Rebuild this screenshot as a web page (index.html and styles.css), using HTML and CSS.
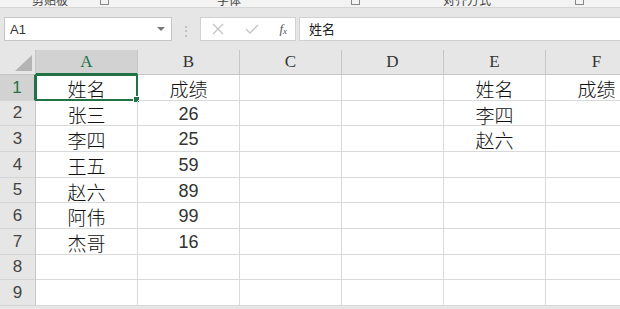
FILE: index.html
```html
<!DOCTYPE html>
<html>
<head>
	<title>成绩表</title>
	<link rel="stylesheet" href="styles.css">
</head>
<body>
	<div class="ribbon-edge">
		<span class="group-label label-clip">剪贴板</span>
		<span class="launcher launch-clip"></span>
		<span class="group-label label-font">字体</span>
		<span class="launcher launch-font"></span>
		<span class="group-label label-align">对齐方式</span>
		<span class="launcher launch-align"></span>
	</div>

	<div class="formula-bar">
		<div class="name-box">
			<span>A1</span>
			<span class="drop"></span>
		</div>
		<div class="grip">⋮</div>
		<div class="fx-buttons">
			<svg width="12" height="12" viewBox="0 0 12 12"><path d="M1 1 L11 11 M11 1 L1 11" stroke="#c4c4c4" stroke-width="1.3" fill="none"/></svg>
			<svg width="14" height="12" viewBox="0 0 14 12"><path d="M1 6 L5 10 L13 2" stroke="#c4c4c4" stroke-width="1.3" fill="none"/></svg>
			<span class="fx">f<sub>x</sub></span>
		</div>
		<div class="formula-input">姓名</div>
	</div>

	<div class="sheet">
		<div class="corner"><span class="tri"></span></div>
		<div class="col-head selected">A</div>
		<div class="col-head">B</div>
		<div class="col-head">C</div>
		<div class="col-head">D</div>
		<div class="col-head">E</div>
		<div class="col-head">F</div>

		<div class="row-head selected">1</div>
		<div class="cell active">姓名<span class="handle"></span></div>
		<div class="cell">成绩</div>
		<div class="cell"></div>
		<div class="cell"></div>
		<div class="cell">姓名</div>
		<div class="cell">成绩</div>

		<div class="row-head">2</div>
		<div class="cell">张三</div>
		<div class="cell num">26</div>
		<div class="cell"></div>
		<div class="cell"></div>
		<div class="cell">李四</div>
		<div class="cell"></div>

		<div class="row-head">3</div>
		<div class="cell">李四</div>
		<div class="cell num">25</div>
		<div class="cell"></div>
		<div class="cell"></div>
		<div class="cell">赵六</div>
		<div class="cell"></div>

		<div class="row-head">4</div>
		<div class="cell">王五</div>
		<div class="cell num">59</div>
		<div class="cell"></div>
		<div class="cell"></div>
		<div class="cell"></div>
		<div class="cell"></div>

		<div class="row-head">5</div>
		<div class="cell">赵六</div>
		<div class="cell num">89</div>
		<div class="cell"></div>
		<div class="cell"></div>
		<div class="cell"></div>
		<div class="cell"></div>

		<div class="row-head">6</div>
		<div class="cell">阿伟</div>
		<div class="cell num">99</div>
		<div class="cell"></div>
		<div class="cell"></div>
		<div class="cell"></div>
		<div class="cell"></div>

		<div class="row-head">7</div>
		<div class="cell">杰哥</div>
		<div class="cell num">16</div>
		<div class="cell"></div>
		<div class="cell"></div>
		<div class="cell"></div>
		<div class="cell"></div>

		<div class="row-head">8</div>
		<div class="cell"></div>
		<div class="cell"></div>
		<div class="cell"></div>
		<div class="cell"></div>
		<div class="cell"></div>
		<div class="cell"></div>

		<div class="row-head">9</div>
		<div class="cell"></div>
		<div class="cell"></div>
		<div class="cell"></div>
		<div class="cell"></div>
		<div class="cell"></div>
		<div class="cell"></div>
	</div>
</body>
</html>
```

FILE: styles.css
```css
body {
	margin: 0;
	width: 620px;
	height: 309px;
	overflow: hidden;
	background-color: #e6e6e6;
	font-family: "Noto Sans CJK SC", "Liberation Sans", sans-serif;
}

/* bottom edge of the ribbon, labels cut off */
.ribbon-edge {
	position: relative;
	height: 7px;
	overflow: hidden;
	background-color: #f3f3f3;
	border-bottom: 1px solid #d6d6d6;
}

.group-label {
	position: absolute;
	top: -9px;
	font-size: 12px;
	color: #444;
}

.label-clip { left: 32px; }
.label-font { left: 217px; }
.label-align { left: 443px; }

.launcher {
	position: absolute;
	top: -4px;
	width: 7px;
	height: 7px;
	border: 1px solid #888;
}

.launch-clip { left: 100px; }
.launch-font { left: 351px; }
.launch-align { left: 575px; }

.formula-bar {
	display: flex;
	align-items: center;
	height: 24px;
	padding: 9px 0 9px 4px;
}

.name-box {
	display: flex;
	align-items: center;
	justify-content: space-between;
	box-sizing: border-box;
	width: 168px;
	height: 24px;
	padding: 0 6px 0 5px;
	background-color: #fff;
	border: 1px solid #c6c6c6;
	font-family: "Liberation Sans", sans-serif;
	font-size: 13px;
	color: #333;
}

.drop {
	width: 0;
	height: 0;
	border-left: 4px solid transparent;
	border-right: 4px solid transparent;
	border-top: 4px solid #777;
}

.grip {
	width: 28px;
	text-align: center;
	color: #b0b0b0;
	font-size: 12px;
}

.fx-buttons {
	display: flex;
	align-items: center;
	justify-content: space-between;
	box-sizing: border-box;
	width: 96px;
	height: 24px;
	padding: 0 8px 0 11px;
	background-color: #fff;
	border: 1px solid #d0d0d0;
}

.fx {
	font-family: "Liberation Serif", serif;
	font-style: italic;
	font-size: 13px;
	color: #555;
}

.fx sub {
	font-size: 9px;
	vertical-align: -1px;
}

.formula-input {
	flex: 1;
	box-sizing: border-box;
	height: 24px;
	margin-left: 3px;
	padding-left: 9px;
	background-color: #fff;
	border: 1px solid #d0d0d0;
	border-right: none;
	font-size: 13px;
	line-height: 22px;
	color: #222;
}

.sheet {
	display: grid;
	grid-template-columns: 36px 102px 102px 102px 102px 102px 102px;
	grid-template-rows: 25px 26px 25px 26px 26px 25px 26px 26px 25px 26px;
	background-color: #fff;
}

.corner {
	position: relative;
	background-color: #e6e6e6;
	border-right: 1px solid #c6c6c6;
	border-bottom: 1px solid #c6c6c6;
}

.tri {
	position: absolute;
	right: 3px;
	bottom: 3px;
	width: 0;
	height: 0;
	border-left: 17px solid transparent;
	border-bottom: 16px solid #b4b4b4;
}

.col-head {
	display: flex;
	align-items: center;
	justify-content: center;
	box-sizing: border-box;
	background-color: #e6e6e6;
	border-right: 1px solid #c6c6c6;
	border-bottom: 1px solid #c6c6c6;
	font-family: "Liberation Serif", serif;
	font-size: 17px;
	color: #333;
}

.col-head.selected {
	background-color: #d2d2d2;
	border-bottom: 2px solid #217346;
	color: #217346;
}

.row-head {
	display: flex;
	align-items: center;
	justify-content: center;
	box-sizing: border-box;
	background-color: #e6e6e6;
	border-right: 1px solid #c6c6c6;
	border-bottom: 1px solid #d4d4d4;
	font-family: "Liberation Sans", sans-serif;
	font-size: 17px;
	color: #444;
}

.row-head.selected {
	background-color: #d2d2d2;
	border-right: 2px solid #217346;
	color: #217346;
}

.cell {
	position: relative;
	display: flex;
	align-items: center;
	justify-content: center;
	box-sizing: border-box;
	padding-top: 2px;
	border-right: 1px solid #d9d9d9;
	border-bottom: 1px solid #d9d9d9;
	font-size: 19px;
	font-weight: 300;
	color: #111;
}

.cell.num {
	font-family: "Liberation Sans", sans-serif;
	font-size: 18px;
	font-weight: normal;
	color: #333;
}

.cell.active {
	border: 2px solid #217346;
	margin: -1px 0 0 -1px;
}

.handle {
	position: absolute;
	right: -4px;
	bottom: -4px;
	width: 5px;
	height: 5px;
	background-color: #217346;
	border: 1px solid #fff;
}
```
